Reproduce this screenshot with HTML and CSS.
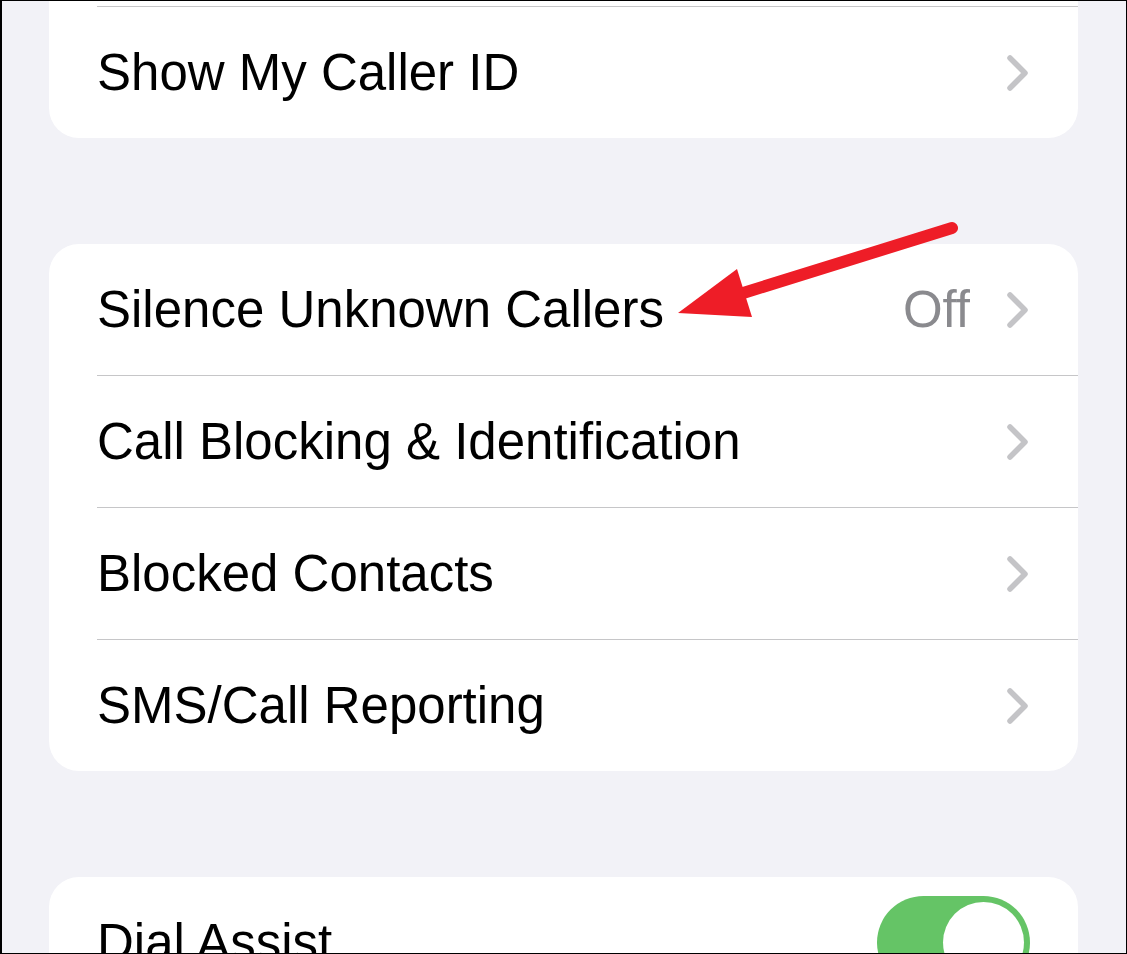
FILE: index.html
```html
<!DOCTYPE html>
<html lang="en">
<head>
<meta charset="utf-8">
<title>Phone Settings</title>
<link rel="stylesheet" href="styles.css">
</head>
<body>
<div class="frame">
  <div class="card card-top">
    <div class="cut"></div>
    <div class="sep"></div>
    <div class="row">
      <span class="label">Show My Caller ID</span>
      <svg class="chev" width="24" height="38" viewBox="0 0 24 38"><polyline points="4,4 19,19 4,34" /></svg>
    </div>
  </div>

  <div class="card">
    <div class="row">
      <span class="label">Silence Unknown Callers</span>
      <span class="value">Off</span>
      <svg class="chev" width="24" height="38" viewBox="0 0 24 38"><polyline points="4,4 19,19 4,34" /></svg>
    </div>
    <div class="sep"></div>
    <div class="row">
      <span class="label">Call Blocking &amp; Identification</span>
      <svg class="chev" width="24" height="38" viewBox="0 0 24 38"><polyline points="4,4 19,19 4,34" /></svg>
    </div>
    <div class="sep"></div>
    <div class="row">
      <span class="label">Blocked Contacts</span>
      <svg class="chev" width="24" height="38" viewBox="0 0 24 38"><polyline points="4,4 19,19 4,34" /></svg>
    </div>
    <div class="sep"></div>
    <div class="row">
      <span class="label">SMS/Call Reporting</span>
      <svg class="chev" width="24" height="38" viewBox="0 0 24 38"><polyline points="4,4 19,19 4,34" /></svg>
    </div>
  </div>

  <div class="card">
    <div class="row">
      <span class="label">Dial Assist</span>
      <span class="toggle"><span class="knob"></span></span>
    </div>
  </div>

  <svg class="arrow" width="1127" height="954" viewBox="0 0 1127 954">
    <line x1="952" y1="228" x2="740" y2="294" stroke="#ee1d27" stroke-width="12" stroke-linecap="round" />
    <polygon points="678,313 737,269 752,317" fill="#ee1d27" />
  </svg>
</div>
</body>
</html>
```

FILE: styles.css
```css
* { box-sizing: border-box; }

html, body {
  margin: 0;
  padding: 0;
  background: #ffffff;
}

.frame {
  position: relative;
  width: 1127px;
  height: 954px;
  overflow: hidden;
  background: #f2f2f7;
  border-top: 1px solid #000;
  border-left: 2px solid #000;
  border-right: 1px solid #000;
  border-bottom: 1px solid #000;
  padding: 0 48px 0 47px;
  display: flex;
  flex-direction: column;
  gap: 106px;
  font-family: "Liberation Sans", Arial, sans-serif;
}

.card {
  background: #ffffff;
  border-radius: 30px;
  flex: none;
}

.card-top {
  border-top-left-radius: 0;
  border-top-right-radius: 0;
}

.cut {
  height: 5px;
}

.sep {
  height: 1px;
  margin-left: 48px;
  background: #c6c6c8;
}

.row {
  height: 131px;
  display: flex;
  align-items: center;
  padding: 0 48px 0 48px;
}

.label {
  flex: 1;
  font-size: 51px;
  color: #000;
  white-space: nowrap;
}

.value {
  font-size: 51px;
  color: #8a8a8e;
  margin-right: 36px;
}

.chev {
  flex: none;
  display: block;
}

.chev polyline {
  fill: none;
  stroke: #c4c4c7;
  stroke-width: 5.5;
  stroke-linecap: round;
  stroke-linejoin: round;
}

.toggle {
  position: relative;
  flex: none;
  width: 153px;
  height: 93px;
  border-radius: 47px;
  background: #65c466;
}

.knob {
  position: absolute;
  top: 6px;
  right: 6px;
  width: 81px;
  height: 81px;
  border-radius: 50%;
  background: #ffffff;
}

.arrow {
  position: absolute;
  left: -2px;
  top: -1px;
  pointer-events: none;
}
```
